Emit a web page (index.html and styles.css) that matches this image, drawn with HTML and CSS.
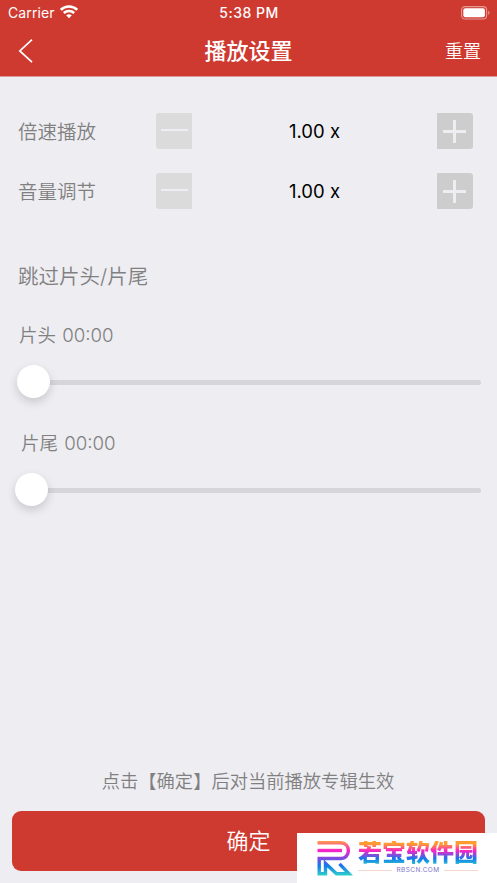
FILE: index.html
```html
<!DOCTYPE html>
<html lang="zh-CN">
<head>
<meta charset="utf-8">
<title>播放设置</title>
<link rel="stylesheet" href="styles.css">
</head>
<body>
<div class="screen">
  <header class="header">
    <div class="status">
      <div class="carrier"><span>Carrier</span>
        <svg width="18" height="14" viewBox="0 0 18 14" fill="none" stroke="#fff" stroke-width="2.5"><path d="M.8 4.800C5.300.5 12.700.5 17.200 4.800M3.800 8c2.900-2.700 7.500-2.700 10.400 0"/><path d="M6.200 10.300c1.700-1.500 3.900-1.500 5.600 0L9 13.200z" fill="#fff" stroke="none"/></svg>
      </div>
      <div class="time">5:38 PM</div>
      <svg class="battery" width="29" height="14" viewBox="0 0 29 14"><rect x=".6" y=".6" width="25" height="12.4" rx="3.4" fill="none" stroke="#e39a94" stroke-width="1.1"/><rect x="2.3" y="2.3" width="21.6" height="9" rx="2" fill="#fff"/><path d="M27.2 4.6c1.8.8 1.8 3.6 0 4.4z" fill="#e39a94"/></svg>
    </div>
    <div class="nav">
      <svg class="back" width="16" height="26" viewBox="0 0 16 26"><path d="M14 1.6 1.8 13 14 24.2" fill="none" stroke="#fff" stroke-width="1.7"/></svg>
      <h1 class="title">播放设置</h1>
      <span class="reset">重置</span>
    </div>
  </header>
  <main class="content">
    <div class="row"><span class="label">倍速播放</span><button class="step minus"></button><span class="value">1.00 x</span><button class="step plus"></button></div>
    <div class="row"><span class="label">音量调节</span><button class="step minus"></button><span class="value">1.00 x</span><button class="step plus"></button></div>
    <h2 class="section">跳过片头/片尾</h2>
    <div class="skip intro"><div class="skip-label">片头 <span class="num">00:00</span></div><div class="slider"><i class="knob"></i><i class="track"></i></div></div>
    <div class="skip outro"><div class="skip-label">片尾 <span class="num">00:00</span></div><div class="slider"><i class="knob"></i><i class="track"></i></div></div>
  </main>
  <footer class="footer">
    <p class="hint">点击【确定】后对当前播放专辑生效</p>
    <button class="confirm">确定</button>
  </footer>
  <div class="brand">
    <svg class="brand-mark" width="37" height="36" viewBox="0 0 37 36"><defs><linearGradient id="g" gradientUnits="userSpaceOnUse" x1="0" y1="0" x2="0" y2="35"><stop offset="0" stop-color="#ff9b4a"/><stop offset=".27" stop-color="#fb20c8"/><stop offset=".5" stop-color="#7c4be0"/><stop offset=".7" stop-color="#1477ee"/><stop offset="1" stop-color="#30d5c8"/></linearGradient></defs><g fill="none" stroke="url(#g)" stroke-width="3.4"><path d="M.5 1.700H23.500C34 1.700 34 17.500 23.500 17.500H2.200V32.800H8.500V22.500L19.500 32.800H32L22.500 22.800"/><path d="M.5 9.500H25"/></g></svg>
    <div class="brand-copy"><div class="brand-name">若宝软件园</div><div class="brand-url"><span>RBSCN.COM</span></div></div>
  </div>
</div>
</body>
</html>
```
FILE: styles.css
```css
* { box-sizing: border-box; }
body { margin: 0; font-family: Inter, "Noto Sans CJK SC", sans-serif; color: #808080; background: #eeedf2; }
button { border: 0; padding: 0; margin: 0; font: inherit; }
svg { display: block; }
.screen { position: relative; width: 497px; height: 883px; overflow: hidden; display: flex; flex-direction: column; }
.header { height: 77px; background: #cf3a30; color: #fff; border-bottom: 1px solid #dc9993; }
.status { height: 26px; padding: 0 7px 0 8px; display: grid; grid-template-columns: 1fr auto 1fr; align-items: center; font-size: 14px; line-height: 26px; }
.carrier { display: flex; align-items: center; gap: 5px; letter-spacing: .1px; }
.carrier svg { margin-bottom: 2px; }
.time { font-weight: 500; letter-spacing: .5px; }
.battery { justify-self: end; margin-bottom: 1px; }
.nav { height: 50px; padding: 0 16px 0 18px; display: grid; grid-template-columns: 1fr auto 1fr; align-items: center; }
.title { margin: 0 2px 0 0; font-size: 22px; font-weight: 500; line-height: 50px; }
.reset { justify-self: end; font-size: 18px; font-weight: 350; margin-bottom: 2px; }
.content { flex: 1; padding-top: 24px; }
.row { height: 60px; padding: 0 24px 0 18px; display: flex; align-items: center; }
.label { width: 138px; font-size: 19.5px; font-weight: 350; padding-bottom: 2px; }
.step { width: 36px; height: 36px; display: flex; align-items: center; justify-content: center; position: relative; }
.minus { background: #dbdbdb; border-radius: 3px 0 0 3px; }
.plus { background: #cdcdcd; border-radius: 0 3px 3px 0; }
.step::before { content: ""; width: 27px; height: 2px; background: #eeedf2; }
.minus::before { margin-bottom: 2px; }
.plus::before { width: 23px; height: 3px; margin: 1px 1px 0 0; }
.plus::after { content: ""; position: absolute; left: 16px; top: 7px; width: 3px; height: 23px; background: #eeedf2; }
.value { flex: 1; text-align: center; color: #000; font-size: 18.5px; }
.section { margin: 40px 0 0 18px; height: 32px; font-size: 20.5px; line-height: 32px; font-weight: 350; }
.skip { height: 108px; }
.intro { padding: 27px 16px 0 17px; }
.outro { padding: 27px 16px 0 15px; }
.skip-label { padding-left: 2px; font-size: 18.5px; line-height: 30px; height: 30px; font-weight: 350; }
.outro .skip-label { padding-left: 6px; }
.num { font-size: 18.7px; font-weight: 350; margin-left: 1px; }
.slider { display: flex; align-items: center; height: 33px; margin-top: 15px; }
.knob { width: 33px; height: 33px; border-radius: 50%; background: #fff; box-shadow: 0 4px 10px rgba(0,0,0,.16); position: relative; z-index: 1; }
.track { flex: 1; height: 5px; margin: 2px 0 0 -2px; background: #d6d5da; border-radius: 0 3px 3px 0; }
.footer { padding: 0 12px 12px; }
.hint { margin: 0 1px 15px 0; text-align: center; font-size: 18.3px; line-height: 30px; font-weight: 350; }
.confirm { display: block; width: 473px; height: 60px; padding-bottom: 4px; border-radius: 9px; background: #cf3a30; color: #fff; font-size: 22px; font-weight: 350; }
.brand { position: absolute; right: 0; bottom: 0; width: 200px; height: 50px; padding: 8px 0 0 20px; background: #fff; display: flex; gap: 4px; }
.brand-name { font-size: 24px; line-height: 24px; height: 26px; font-weight: 900; background: linear-gradient(#ff9b30 12%, #fb20c8 38%, #1477ee 68%, #30d5c8 95%); -webkit-background-clip: text; color: transparent; }
.brand-url { display: flex; align-items: center; gap: 4px; font-size: 6.5px; line-height: 7px; letter-spacing: .4px; color: #8175cb; }
.brand-url::before, .brand-url::after { content: ""; flex: 1; height: 1px; background: #f5d8ce; }
```
